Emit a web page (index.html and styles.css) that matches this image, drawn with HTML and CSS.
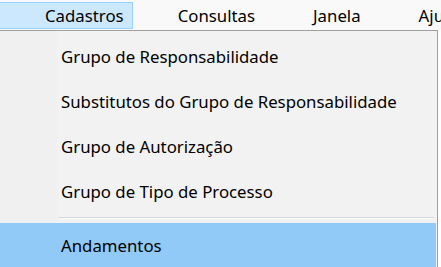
FILE: index.html
```html
<!DOCTYPE html>
<html lang="pt">
<head>
<meta charset="utf-8">
<title>Menu Cadastros</title>
<link rel="stylesheet" href="styles.css">
</head>
<body>
<div class="screen">
  <nav class="menubar">
    <div class="mb-item mb-active">Cadastros</div>
    <div class="mb-item">Consultas</div>
    <div class="mb-item mb-wide">Janela</div>
    <div class="mb-item mb-wide">Ajuda</div>
  </nav>
  <div class="dropdown">
    <div class="dd-item">Grupo de Responsabilidade</div>
    <div class="dd-item">Substitutos do Grupo de Responsabilidade</div>
    <div class="dd-item">Grupo de Autorização</div>
    <div class="dd-item">Grupo de Tipo de Processo</div>
    <div class="dd-sep"></div>
    <div class="dd-item dd-selected">Andamentos</div>
  </div>
</div>
</body>
</html>
```

FILE: styles.css
```css
html, body {
  margin: 0;
  padding: 0;
  background: #ffffff;
}
.screen {
  width: 441px;
  height: 267px;
  overflow: hidden;
  font-family: "Noto Sans", "Open Sans", sans-serif;
  font-size: 16.8px;
  color: #000;
}
.menubar {
  height: 30px;
  background: #f9f9f9;
  display: flex;
  align-items: center;
  white-space: nowrap;
  gap: 37px;
}
.mb-item {
  height: 27px;
  box-sizing: border-box;
  line-height: 25px;
  padding: 0 7px;
  border: 1px solid transparent;
}
.mb-wide {
  margin-left: 5px;
}
.mb-active {
  margin-left: -1px;
  padding-left: 45px;
  padding-right: 8px;
  background: #cce8ff;
  border-color: #99d1ff;
}
.dropdown {
  width: 438px;
  box-sizing: border-box;
  border-top: 1px solid #a0a0a0;
  border-right: 1px solid #a0a0a0;
  background: linear-gradient(to right, #f0f0f0 0, #f0f0f0 57px, #f2f2f2 57px);
  padding: 3px 1px 0 0;
  height: 237px;
}
.dd-item {
  height: 45px;
  line-height: 45px;
  padding-left: 61px;
  white-space: nowrap;
}
.dd-sep {
  height: 2px;
  margin: 3px 2px 4px 58px;
  border-top: 1px solid #d7d7d7;
  box-sizing: border-box;
  background: #fbfbfb;
}
.dd-selected {
  background: #91c9f7;
}
```
